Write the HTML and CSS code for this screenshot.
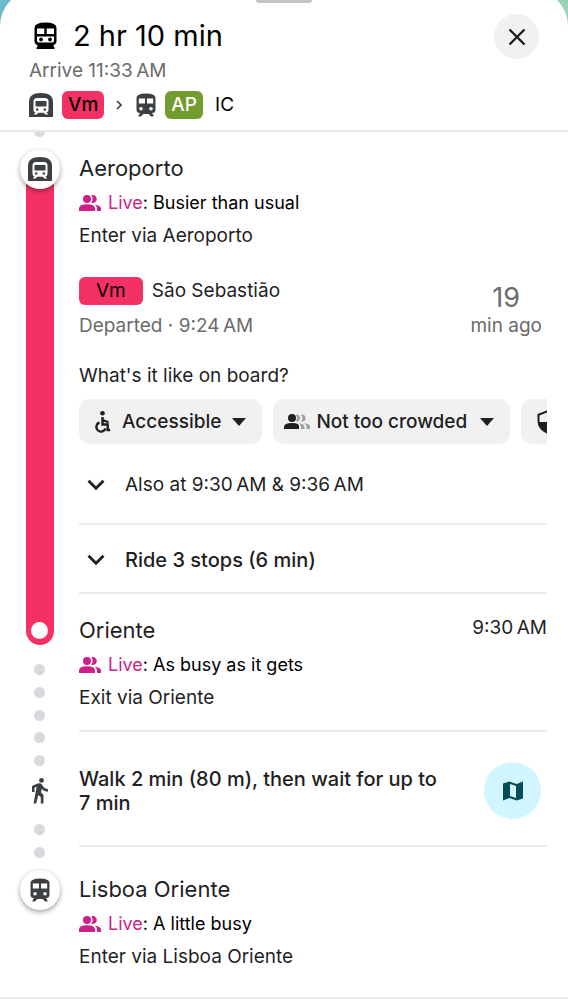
FILE: index.html
```html
<!DOCTYPE html>
<html lang="en">
<head>
<meta charset="utf-8">
<meta name="viewport" content="width=device-width, initial-scale=1">
<title>Trip details</title>
<link rel="stylesheet" href="styles.css">
</head>
<body>
<svg class="defs" aria-hidden="true">
  <symbol id="subway" viewBox="0 0 24 24">
    <path fill="currentColor" fill-rule="evenodd" d="M0 24V9Q0 0 12 0T24 9V24ZM8 5Q4.500 5 4.500 8.500V17Q4.500 19 6.500 19.500L5 21V21.500H7.500L9.300 19.700H14.700L16.500 21.500H19V21L17.500 19.500Q19.500 19 19.500 17V8.500Q19.500 5 16 5ZM6.500 8H17.500V13.500H6.500ZM8.200 15.200a1.300 1.300 0 1 1 0 2.600a1.300 1.300 0 1 1 0-2.600ZM15.800 15.200a1.300 1.300 0 1 1 0 2.600a1.300 1.300 0 1 1 0-2.600Z"/>
  </symbol>
  <symbol id="train" viewBox="0 0 20 24">
    <path fill="currentColor" fill-rule="evenodd" d="M.500 5Q.500 .500 10 .500T19.500 5V16.500Q19.500 20 16 20L17.500 22.500V23.500H15L12.700 21H7.300L5 23.500H2.500V22.500L4 20Q.500 20 .500 16.500ZM2.800 5.500V10.500H9V5.500ZM11 5.500V10.500H17.200V5.500ZM5 14a1.800 1.800 0 1 0 0 3.600a1.800 1.800 0 1 0 0-3.600ZM15 14a1.800 1.800 0 1 0 0 3.600a1.800 1.800 0 1 0 0-3.600Z"/>
  </symbol>
  <symbol id="rail" viewBox="0 0 24 28">
    <path fill="currentColor" fill-rule="evenodd" d="M1 6Q1 .500 12 .500T23 6V19Q23 22 20 23V24L21 26V27H3V26L4 24V23Q1 22 1 19ZM3.500 6.500V12H10.800V6.500ZM13.200 6.500V12H20.500V6.500ZM3.500 14.500V18.500Q3.500 20.500 5.500 20.500H18.500Q20.500 20.500 20.500 18.500V14.500Z"/>
    <circle fill="currentColor" cx="7.500" cy="17.500" r="1.900"/><circle fill="currentColor" cx="16.500" cy="17.500" r="1.900"/>
  </symbol>
  <symbol id="people" viewBox="0 0 22 16">
    <circle cx="8" cy="4" r="4" fill="currentColor"/>
    <path fill="currentColor" d="M0 16V13.500Q0 9.200 8 9.200T16 13.500V16ZM12.300 .300A4 4 0 1 1 12.300 7.700Q13.600 6 13.600 4T12.300 .300ZM16 9.800Q22 10.800 22 13.500V16H18V13.500Q18 11.200 16 9.800Z"/>
  </symbol>
  <symbol id="chevron" viewBox="0 0 18 12">
    <path d="M1.500 1.800 9 9.300l7.500-7.500" fill="none" stroke="currentColor" stroke-width="2.800"/>
  </symbol>
  <symbol id="caret" viewBox="0 0 14 8"><path d="M0 0h14L7 8z" fill="currentColor"/></symbol>
</svg>

<main class="sheet">
  <div class="handle"></div>
  <header class="summary">
    <div class="summary-text">
      <h1 class="duration"><svg class="icon-rail" aria-hidden="true"><use href="#rail"/></svg>2 hr 10 min</h1>
      <p class="arrival">Arrive 11:33&#8239;AM</p>
      <div class="route">
        <svg class="icon-subway" aria-hidden="true"><use href="#subway"/></svg>
        <span class="line line-vm">Vm</span>
        <svg class="icon-next" viewBox="0 0 6 10" aria-hidden="true"><path d="M1 1l4 4-4 4" fill="none" stroke="currentColor" stroke-width="1.600"/></svg>
        <svg class="icon-train" aria-hidden="true"><use href="#train"/></svg>
        <span class="line line-ap">AP</span>
        <span class="service">IC</span>
      </div>
    </div>
    <button class="close" type="button" aria-label="Close">
      <svg viewBox="0 0 18 18" aria-hidden="true"><path d="M1.500 1.500l15 15M16.500 1.500l-15 15" fill="none" stroke="currentColor" stroke-width="2.400"/></svg>
    </button>
  </header>

  <ol class="timeline">
    <li class="step">
      <div class="track">
        <i class="dot dot-cut"></i>
        <span class="badge"><svg class="icon-subway" aria-hidden="true"><use href="#subway"/></svg></span>
        <i class="bar"></i>
      </div>
      <div class="body">
        <div class="stop">
          <h2 class="name">Aeroporto</h2>
          <p class="live"><svg class="icon-people" aria-hidden="true"><use href="#people"/></svg><span><em>Live</em>: Busier than usual</span></p>
          <p class="access">Enter via Aeroporto</p>
        </div>
        <div class="departure">
          <div>
            <p class="headsign"><span class="line line-vm line-wide">Vm</span>São Sebastião</p>
            <p class="departed">Departed · 9:24&#8239;AM</p>
          </div>
          <p class="ago"><strong>19</strong>min ago</p>
        </div>
        <p class="question">What's it like on board?</p>
        <div class="chips">
          <button class="chip" type="button">
            <svg class="icon-access" viewBox="0 0 16 22" aria-hidden="true"><circle cx="7.500" cy="2.300" r="2.300" fill="currentColor"/><path d="M7.500 6v7.500h5.200V19h2.500M7.500 8.500Q10 11 13.500 11M4.500 11.500a4.700 4.700 0 1 0 6 6" fill="none" stroke="currentColor" stroke-width="2.400"/></svg>
            Accessible
            <svg class="icon-caret" aria-hidden="true"><use href="#caret"/></svg>
          </button>
          <button class="chip chip-crowd" type="button">
            <svg class="icon-crowd" viewBox="0 0 26 16" aria-hidden="true"><circle cx="8" cy="4" r="4" fill="currentColor"/><path fill="currentColor" d="M0 15V13Q0 9 8 9T15 13V15Z"/><path fill="#a0a0a0" d="M11.500 .500Q16 0 16 4T11.500 7.500Q13 6 13 4T11.500 .500ZM17 .500Q21.500 0 21.500 4T17 7.500Q18.500 6 18.500 4T17 .500ZM15 9Q20.500 10 20.500 13V15H17V13Q17 11 15 9ZM20.500 9Q26 10 26 13V15H22.500V13Q22.500 11 20.500 9Z"/></svg>
            Not too crowded
            <svg class="icon-caret" aria-hidden="true"><use href="#caret"/></svg>
          </button>
          <button class="chip chip-safety" type="button" aria-label="Safety">
            <svg class="icon-shield" viewBox="0 0 20 24" aria-hidden="true"><path d="M10 1.500 1.500 4.700V11Q1.500 18.500 10 22.500 18.500 18.500 18.500 11V4.700Z" fill="none" stroke="currentColor" stroke-width="2"/><path d="M1.500 12H10V1.500L18.500 4.700V12H10V22.500Q2.500 19 1.500 12Z" fill="currentColor"/></svg>
          </button>
        </div>
        <button class="expander expander-tall" type="button"><svg class="icon-chevron" aria-hidden="true"><use href="#chevron"/></svg>Also at 9:30&#8239;AM &amp; 9:36&#8239;AM</button>
        <button class="expander expander-strong" type="button"><svg class="icon-chevron" aria-hidden="true"><use href="#chevron"/></svg>Ride 3 stops (6 min)</button>
      </div>
    </li>

    <li class="step">
      <div class="track">
        <i class="bar-end"></i>
        <i class="dot"></i><i class="dot"></i><i class="dot"></i>
      </div>
      <div class="body body-ruled">
        <div class="stop">
          <div class="stop-head"><h2 class="name">Oriente</h2><time class="time">9:30&#8239;AM</time></div>
          <p class="live"><svg class="icon-people" aria-hidden="true"><use href="#people"/></svg><span><em>Live</em>: As busy as it gets</span></p>
          <p class="access">Exit via Oriente</p>
        </div>
      </div>
    </li>

    <li class="step">
      <div class="track">
        <i class="dot"></i><i class="dot"></i>
        <svg class="icon-walk" viewBox="0 0 16 26" aria-hidden="true"><circle cx="9.500" cy="2.400" r="2.400" fill="currentColor"/><path fill="currentColor" d="M5.600 5.600 0 8V14H2.500V9.700L4.700 8.800 1.500 25.500H4.200L6.300 17 8.800 19.300V25.500H11.500V17L9 14.200 9.700 11Q11.800 13.700 16 13.700V11.200Q12.700 11.200 11 8.300L9.900 6.500Q8.500 4.800 5.600 5.600Z"/></svg>
        <i class="dot dot-after"></i>
      </div>
      <div class="body body-ruled walk">
        <p class="walk-text">Walk 2 min (80 m), then wait for up to 7&nbsp;min</p>
        <button class="map" type="button" aria-label="Show walk on map">
          <svg viewBox="0 0 20 20" aria-hidden="true"><path fill="currentColor" fill-rule="evenodd" d="M0 2.500 6.500 .500 13.500 3 20 .500V17.500L13.500 19.500 6.500 17 0 19.500ZM7 3V15L13 17V5Z"/></svg>
        </button>
      </div>
    </li>

    <li class="step">
      <div class="track">
        <i class="dot"></i>
        <span class="badge"><svg class="icon-train" aria-hidden="true"><use href="#train"/></svg></span>
      </div>
      <div class="body body-last">
        <div class="stop">
          <h2 class="name">Lisboa Oriente</h2>
          <p class="live"><svg class="icon-people" aria-hidden="true"><use href="#people"/></svg><span><em>Live</em>: A little busy</span></p>
          <p class="access">Enter via Lisboa Oriente</p>
        </div>
      </div>
    </li>
  </ol>
</main>
</body>
</html>
```
FILE: styles.css
```css
* { box-sizing: border-box; }

html { overflow: hidden; }

body {
  margin: 0;
  overflow: hidden;
  background: linear-gradient(90deg, #6cbccb 0 50%, #98d4b8 50%);
  color: #1f1f1f;
  font: 400 19px/24px Inter, "Noto Sans", sans-serif;
}

h1, h2, p, ol { margin: 0; padding: 0; font-weight: 400; }
em, strong { font-style: normal; font-weight: 400; }
svg, i { display: block; flex: none; }
button { border: 0; padding: 0; background: none; color: inherit; font: inherit; cursor: pointer; }

.defs { display: none; }

.sheet {
  margin-top: -10px;
  min-height: calc(100vh + 10px);
  border-radius: 36px 36px 0 0;
  background: #fff;
}

.handle {
  width: 56px;
  height: 13px;
  margin: 0 auto;
  border-radius: 3px;
  background: #c4c4c4;
}

/* Summary */
.summary {
  display: flex;
  justify-content: space-between;
  align-items: flex-start;
  padding: 11px 29px 11px;
  border-bottom: 2px solid #e8e8e8;
}

.duration {
  display: flex;
  align-items: center;
  gap: 15px;
  padding-left: 4px;
  color: #000;
  font-size: 29px;
  line-height: 44px;
}

.arrival { margin-top: 1px; color: #6b6b6b; }

.route {
  display: flex;
  align-items: center;
  gap: 9px;
  margin-top: 8px;
  color: #3c4043;
}

.line {
  padding: 0 6px;
  border-radius: 6px;
  font-weight: 500;
  line-height: 28px;
}

.line-vm { background: #f43164; color: #000; }
.line-ap { background: #719c2e; color: #fff; }
.line-wide { padding: 0 17px; font-weight: 400; }
.service { margin-left: 3px; color: #000; }

.close {
  display: grid;
  place-items: center;
  width: 45px;
  height: 45px;
  border-radius: 50%;
  background: #f1f1f1;
}
.close svg { width: 18px; height: 18px; }

/* Timeline */
.timeline { list-style: none; border-bottom: 2px solid #e8e8e8; }

.step {
  display: grid;
  grid-template-columns: 79px minmax(0, 1fr);
  padding-right: 21px;
}

.track {
  display: flex;
  flex-direction: column;
  align-items: center;
  gap: 12px;
}

.dot {
  width: 11px;
  height: 11px;
  border-radius: 50%;
  background: #dadade;
}
.dot-cut { height: 5px; border-radius: 0 0 6px 6px; }
.dot-after { margin-top: 8px; }

.badge {
  z-index: 1;
  display: grid;
  place-items: center;
  width: 40px;
  height: 40px;
  border-radius: 50%;
  background: #fff;
  box-shadow: 0 2px 5px rgb(0 0 0 / 38%);
  color: #3c4043;
}

.bar {
  flex: 1;
  width: 28px;
  margin-top: -20px;
  background: #f43164;
}

.bar-end {
  display: flex;
  align-items: flex-end;
  justify-content: center;
  width: 28px;
  height: 51px;
  margin-bottom: 7px;
  padding-bottom: 6px;
  border-radius: 0 0 14px 14px;
  background: #f43164;
}
.bar-end::after {
  content: "";
  width: 17px;
  height: 17px;
  border-radius: 50%;
  background: #fff;
}

.body { padding-top: 22px; }
.body-ruled { padding-bottom: 20px; border-bottom: 2px solid #ebebeb; }
.body-last { padding-top: 28px; padding-bottom: 28px; }

.stop { display: grid; gap: 9px; }
.stop-head { display: flex; justify-content: space-between; align-items: flex-start; }
.name { font-size: 22px; line-height: 28px; }
.live { display: flex; align-items: center; gap: 7px; color: #000; font-size: 18px; }
.live em, .icon-people { color: #cc1f87; }

.departure {
  display: flex;
  justify-content: space-between;
  margin-top: 29px;
}
.headsign { display: flex; gap: 9px; line-height: 28px; }
.departed { margin-top: 9px; color: #6b6b6b; }
.ago { padding: 5px 5px 0 0; color: #6b6b6b; text-align: center; }
.ago strong { display: block; font-size: 27px; line-height: 32px; }
.question { margin-top: 26px; }

.chips {
  display: flex;
  gap: 11px;
  margin-top: 11px;
  overflow: hidden;
}
.chip {
  display: flex;
  flex: none;
  align-items: center;
  gap: 11px;
  height: 45px;
  padding: 0 16px;
  border-radius: 11px;
  background: #f1f1f1;
  font-weight: 500;
}
.chip-crowd { gap: 6px; padding: 0 16px 0 11px; }
.chip-crowd .icon-caret { margin-left: 7px; }

.expander {
  display: flex;
  align-items: center;
  gap: 20px;
  width: 100%;
  padding: 23px 8px 20px;
  border-bottom: 2px solid #ebebeb;
  text-align: left;
}
.expander-tall { padding: 29px 8px 26px; }
.expander-strong { font-size: 20px; font-weight: 500; }

.walk {
  display: flex;
  align-items: center;
  justify-content: space-between;
  gap: 32px;
  padding: 30px 6px 26px 0;
}
.walk-text { max-width: 368px; font-size: 20px; font-weight: 500; }

.map {
  display: grid;
  flex: none;
  place-items: center;
  width: 57px;
  height: 57px;
  border-radius: 50%;
  background: #d2f6ff;
  color: #084c57;
}
.map svg { width: 20px; height: 20px; }

/* Icon sizes */
.icon-rail { width: 25px; height: 28px; }
.icon-subway { width: 24px; height: 24px; }
.icon-train { width: 20px; height: 24px; }
.icon-next { width: 6px; height: 10px; margin: 0 5px 0 3px; }
.icon-people { width: 22px; height: 16px; }
.icon-access { width: 16px; height: 22px; }
.icon-crowd { width: 26px; height: 16px; }
.icon-shield { width: 20px; height: 24px; }
.icon-caret { width: 14px; height: 8px; }
.icon-chevron { width: 18px; height: 12px; }
.icon-walk { width: 16px; height: 26px; color: #3c4043; }
```
